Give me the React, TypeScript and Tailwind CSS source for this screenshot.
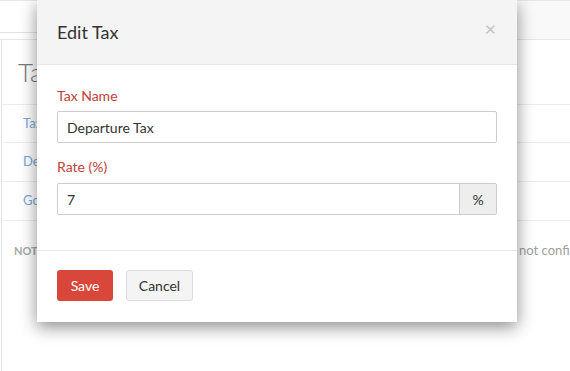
import React from "react";

export default function App() {
  return (
    <div className="relative w-[570px] h-[371px] overflow-hidden bg-white" style={{ fontFamily: "Lato, 'Open Sans', sans-serif" }}>
      {/* background page */}
      <div className="flex flex-col h-full">
        <div className="flex h-[40px] border-t border-[#e6e6e6] border-b">
          <div className="w-[120px] h-[32px] border-b border-[#e3e3e3] bg-white"></div>
          <div className="flex-1 bg-[#f9f9f9]"></div>
        </div>
        <div className="flex-1 ml-[1px] border-l border-[#e3e3e3] flex flex-col">
          <div className="h-[65px] flex items-center pl-[16px] border-b border-[#ececec] text-[26px] text-[#7a7a7a] font-light">Taxes</div>
          <div className="h-[38px] flex items-center pl-[21px] border-b border-[#ececec] text-[13px] text-[#7aa7d8]">Tax</div>
          <div className="h-[39px] flex items-center pl-[21px] border-b border-[#ececec] text-[13px] text-[#7aa7d8]">Departure</div>
          <div className="h-[39px] flex items-center pl-[21px] border-b border-[#ececec] text-[13px] text-[#7aa7d8]">Goods</div>
          <div className="h-[60px] flex items-center pl-[12px] text-[11px] whitespace-nowrap">
            <span className="font-bold text-[#a8a8a8]">NOTE</span>
            <span className="text-[13px] text-[#a0a0a0] ml-[463px]">is not configured</span>
          </div>
        </div>
      </div>

      {/* dialog */}
      <div className="absolute left-[37px] top-0 w-[480px] bg-white shadow-[0_5px_16px_rgba(0,0,0,0.45)]">
        <div className="h-[65px] bg-[#f4f4f4] border-b border-[#e6e6e6] px-5 flex items-center justify-between">
          <span className="text-[18px] text-[#333]">Edit Tax</span>
          <span className="text-[20px] leading-none text-[#c2c2c2] mr-[1px] mt-[-9px]">×</span>
        </div>
        <div className="px-5 pt-[21px] pb-[35px]">
          <div className="text-[14px] leading-[20px] text-[#c0403a] mb-[5px]">Tax Name</div>
          <div className="h-[32px] border border-[#cccccc] rounded-[2px] flex items-center px-[9px] text-[14px] text-[#333]">Departure Tax</div>
          <div className="text-[14px] leading-[20px] text-[#c0403a] mt-[14px] mb-[6px]">Rate (%)</div>
          <div className="h-[32px] border border-[#cccccc] rounded-[2px] flex text-[14px] text-[#333]">
            <div className="flex-1 flex items-center px-[9px]">7</div>
            <div className="w-[37px] bg-[#eeeeee] border-l border-[#cccccc] flex items-center justify-center">%</div>
          </div>
        </div>
        <div className="border-t border-[#e8e8e8] px-5 pt-[19px] pb-[21px] flex gap-[13px]">
          <div className="w-[56px] h-[31px] rounded-[3px] bg-[#d9473a] text-white text-[14px] flex items-center justify-center">Save</div>
          <div className="w-[67px] h-[31px] rounded-[3px] bg-[#f4f4f4] border border-[#dcdcdc] text-[#333] text-[14px] flex items-center justify-center">Cancel</div>
        </div>
      </div>
    </div>
  );
}
